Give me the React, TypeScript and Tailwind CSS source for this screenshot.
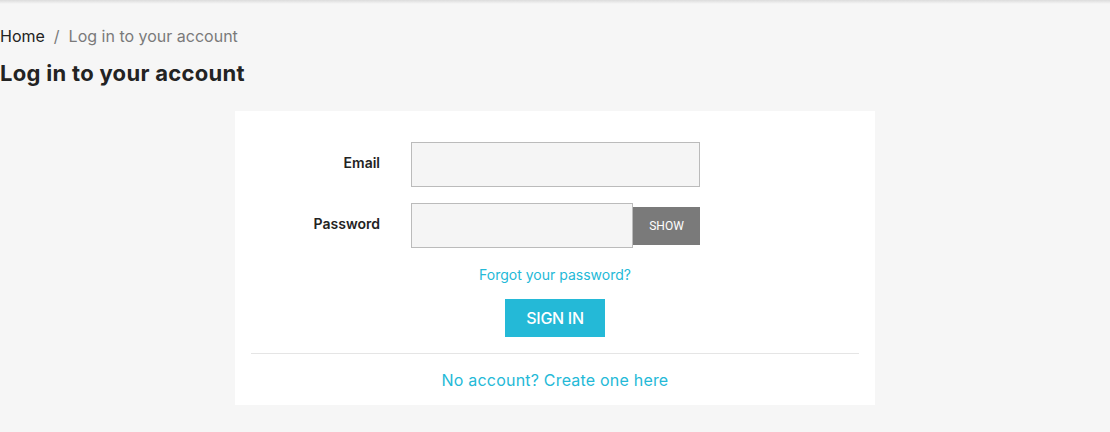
import React from 'react';

const font = "font-['Inter','Noto_Sans',sans-serif]";

const LoginPage = () => {
    return (
        <div className={`min-h-[432px] w-[1110px] bg-[#f6f6f6] ${font} text-[#232323]`}>
            <div className="h-[4px] bg-linear-to-b from-[#dcdcdc] to-[#f6f6f6]" />
            <nav className="mt-[20px] h-[24px] flex items-center text-[16px]">
                <span className="text-[#232323]">Home</span>
                <span className="mx-[9px] text-[#7a7a7a]">/</span>
                <span className="text-[#7a7a7a]">Log in to your account</span>
            </nav>
            <h1 className="mt-[10px] h-[30px] leading-[30px] text-[22px] font-bold tracking-[0.3px]">Log in to your account</h1>
            <section className="mx-auto mt-[23px] w-[640px] bg-white px-4 pt-[31px] pb-[13px]">
                <form className="flex flex-col">
                    <div className="flex items-center mb-4 h-[45px]">
                        <label className="w-[129px] text-right text-[14px] leading-[20px] font-semibold -mt-[4px]">Email</label>
                        <input type="email" className="ml-[31px] h-[45px] w-[289px] border border-[#bbbbbb] bg-[#f5f5f5] outline-none" />
                    </div>
                    <div className="flex items-center h-[45px]">
                        <label className="w-[129px] text-right text-[14px] leading-[20px] font-semibold -mt-[4px]">Password</label>
                        <div className="ml-[31px] flex items-center w-[289px]">
                            <input type="password" className="h-[45px] min-w-0 w-[222px] border border-[#bbbbbb] bg-[#f5f5f5] outline-none" />
                            <button type="button" className="h-[38px] w-[67px] shrink-0 bg-[#7a7a7a] text-white text-[12px] font-['Roboto',sans-serif]">SHOW</button>
                        </div>
                    </div>
                    <div className="mt-[16px] text-center leading-[20px]">
                        <a className="text-[14px] leading-[20px] text-[#24b9d7]">Forgot your password?</a>
                    </div>
                    <div className="mt-[14px] flex justify-center">
                        <button type="button" className="h-[38px] w-[100px] bg-[#24b9d7] text-white text-[16px] font-medium tracking-[-0.3px]">SIGN IN</button>
                    </div>
                </form>
                <hr className="mt-[16px] border-t border-[#e5e5e5]" />
                <div className="mt-[14px] text-center leading-[24px]">
                    <a className="text-[16px] leading-[24px] text-[#24b9d7] tracking-[0.2px]">No account? Create one here</a>
                </div>
            </section>
        </div>
    );
};

export default LoginPage;
